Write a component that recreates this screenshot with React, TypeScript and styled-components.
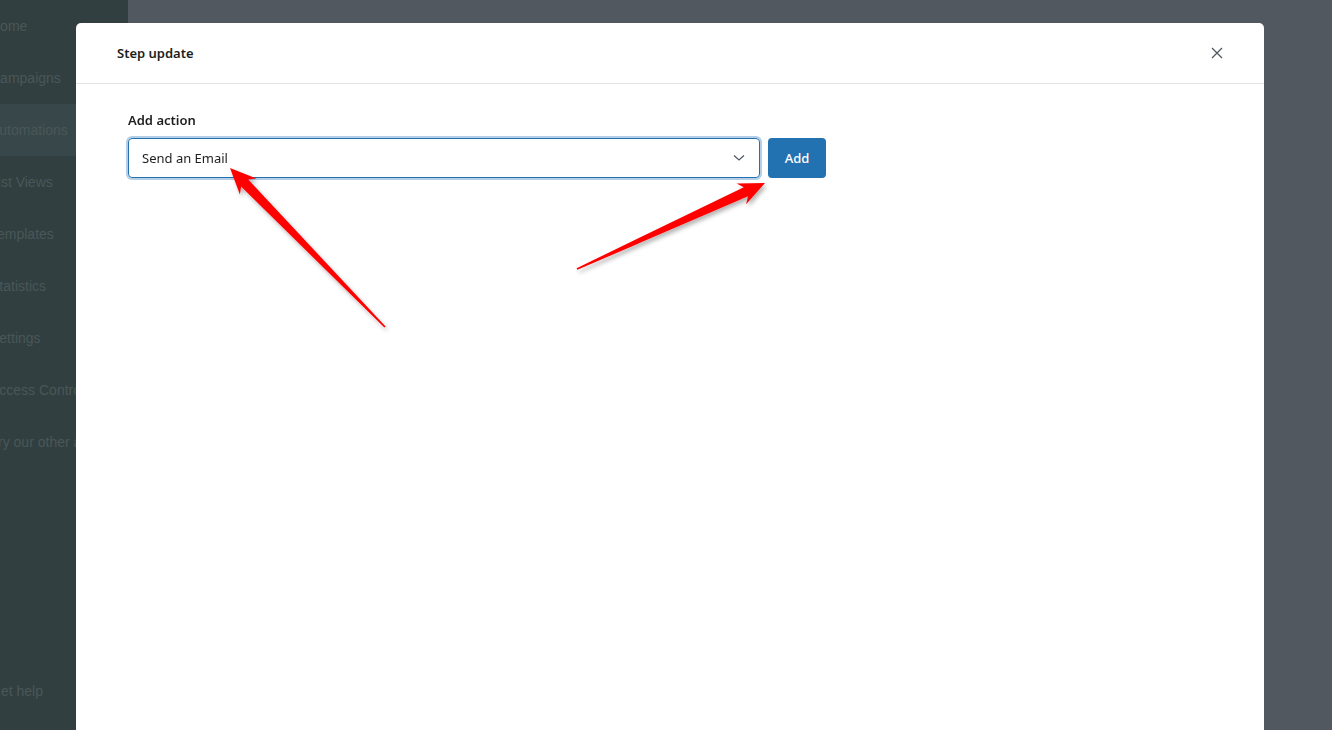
import React from "react";
import styled, { createGlobalStyle } from "styled-components";

const GlobalStyle = createGlobalStyle`
  html, body { margin: 0; padding: 0; }
  body {
    width: 1332px;
    height: 730px;
    overflow: hidden;
    font-family: "Noto Sans", "Open Sans", Arial, sans-serif;
  }
`;

const Page = styled.div`
  display: flex;
  width: 1332px;
  height: 730px;
  background: #51585f;
`;

const Sidebar = styled.nav`
  display: flex;
  flex-direction: column;
  width: 128px;
  flex-shrink: 0;
  background: #313f40;
  overflow: hidden;
  padding-bottom: 13px;
  box-sizing: border-box;
`;

const NavItem = styled.div<{ $active?: boolean; $bottom?: boolean }>`
  height: 52px;
  display: flex;
  align-items: center;
  white-space: nowrap;
  font-family: "Liberation Sans", Arial, sans-serif;
  font-size: 14px;
  color: #4a5758;
  text-indent: -10px;
  background: ${(p) => (p.$active ? "#38474a" : "transparent")};
  margin-top: ${(p) => (p.$bottom ? "auto" : "0")};
`;

const Main = styled.main`
  flex: 1;
`;

const Dialog = styled.div`
  position: fixed;
  left: 76px;
  top: 23px;
  width: 1188px;
  height: 760px;
  background: #ffffff;
  border-radius: 5px;
  display: flex;
  flex-direction: column;
`;

const DialogHeader = styled.header`
  height: 61px;
  display: flex;
  align-items: center;
  justify-content: space-between;
  padding: 0 37px 0 41px;
  border-bottom: 1px solid #e4e4e4;
  box-sizing: border-box;
  flex-shrink: 0;
`;

const Title = styled.h1`
  margin: 0;
  font-size: 13px;
  font-weight: 600;
  color: #1e1e1e;
`;

const CloseButton = styled.button`
  width: 20px;
  height: 20px;
  border: 0;
  background: transparent;
  padding: 0;
  display: flex;
  align-items: center;
  justify-content: center;
  cursor: pointer;
`;

const DialogBody = styled.div`
  padding: 26px 52px;
`;

const Label = styled.label`
  display: block;
  font-size: 13px;
  font-weight: 600;
  line-height: 20px;
  color: #1e1e1e;
  margin-bottom: 8px;
`;

const Row = styled.div`
  display: flex;
  gap: 8px;
`;

const Select = styled.div`
  width: 632px;
  height: 40px;
  box-sizing: border-box;
  border: 1px solid #2271b1;
  border-radius: 4px;
  box-shadow: 0 0 0 2px #b5cfe7;
  display: flex;
  align-items: center;
  justify-content: space-between;
  padding: 0 14px 0 13px;
  font-size: 13px;
  color: #1e1e1e;
`;

const AddButton = styled.button`
  width: 58px;
  height: 40px;
  border: 0;
  border-radius: 4px;
  background: #2271b1;
  color: #ffffff;
  font-family: "Noto Sans", "Open Sans", Arial, sans-serif;
  font-size: 13px;
  font-weight: 500;
  cursor: pointer;
`;

const ArrowLayer = styled.svg`
  position: fixed;
  left: 0;
  top: 0;
  width: 1332px;
  height: 730px;
  pointer-events: none;
  overflow: visible;
`;

type Pt = [number, number];

function arrowPoints(tip: Pt, tail: Pt): string {
  const dx = tail[0] - tip[0];
  const dy = tail[1] - tip[1];
  const len = Math.hypot(dx, dy);
  const ux = dx / len;
  const uy = dy / len;
  const nx = -uy;
  const ny = ux;
  const at = (a: number, p: number): string =>
    `${(tip[0] + ux * a + nx * p).toFixed(1)},${(tip[1] + uy * a + ny * p).toFixed(1)}`;
  return [
    at(0, 0),
    at(26, 11.5),
    at(21, 5),
    at(len, 0.9),
    at(len, -0.9),
    at(21, -5),
    at(26, -11.5),
  ].join(" ");
}

const Pointer: React.FC<{ tip: Pt; tail: Pt }> = ({ tip, tail }) => (
  <polygon points={arrowPoints(tip, tail)} fill="#ff0000" />
);

export default function App() {
  const nav = [
    "Home",
    "Campaigns",
    "Automations",
    "List Views",
    "Templates",
    "Statistics",
    "Settings",
    "Access Control",
    "Try our other apps",
  ];
  return (
    <>
      <GlobalStyle />
      <Page>
        <Sidebar>
          {nav.map((n) => (
            <NavItem key={n} $active={n === "Automations"}>
              {n}
            </NavItem>
          ))}
          <NavItem $bottom>Get help</NavItem>
        </Sidebar>
        <Main />
      </Page>
      <Dialog role="dialog">
        <DialogHeader>
          <Title>Step update</Title>
          <CloseButton aria-label="Close">
            <svg width="12" height="12" viewBox="0 0 12 12">
              <path d="M1 1 L11 11 M11 1 L1 11" stroke="#50575e" strokeWidth="1.3" fill="none" />
            </svg>
          </CloseButton>
        </DialogHeader>
        <DialogBody>
          <Label>Add action</Label>
          <Row>
            <Select>
              <span>Send an Email</span>
              <svg width="12" height="8" viewBox="0 0 12 8">
                <path d="M1 1.5 L6 6 L11 1.5" stroke="#50575e" strokeWidth="1.2" fill="none" />
              </svg>
            </Select>
            <AddButton>Add</AddButton>
          </Row>
        </DialogBody>
      </Dialog>
      <ArrowLayer viewBox="0 0 1332 730">
        <defs>
          <filter id="arrowShadow" x="-20%" y="-20%" width="140%" height="140%">
            <feDropShadow dx="2" dy="3" stdDeviation="2" floodColor="#000" floodOpacity="0.3" />
          </filter>
        </defs>
        <g filter="url(#arrowShadow)">
          <Pointer tip={[230, 168]} tail={[385, 327]} />
          <Pointer tip={[765, 183]} tail={[577, 269]} />
        </g>
      </ArrowLayer>
    </>
  );
}
